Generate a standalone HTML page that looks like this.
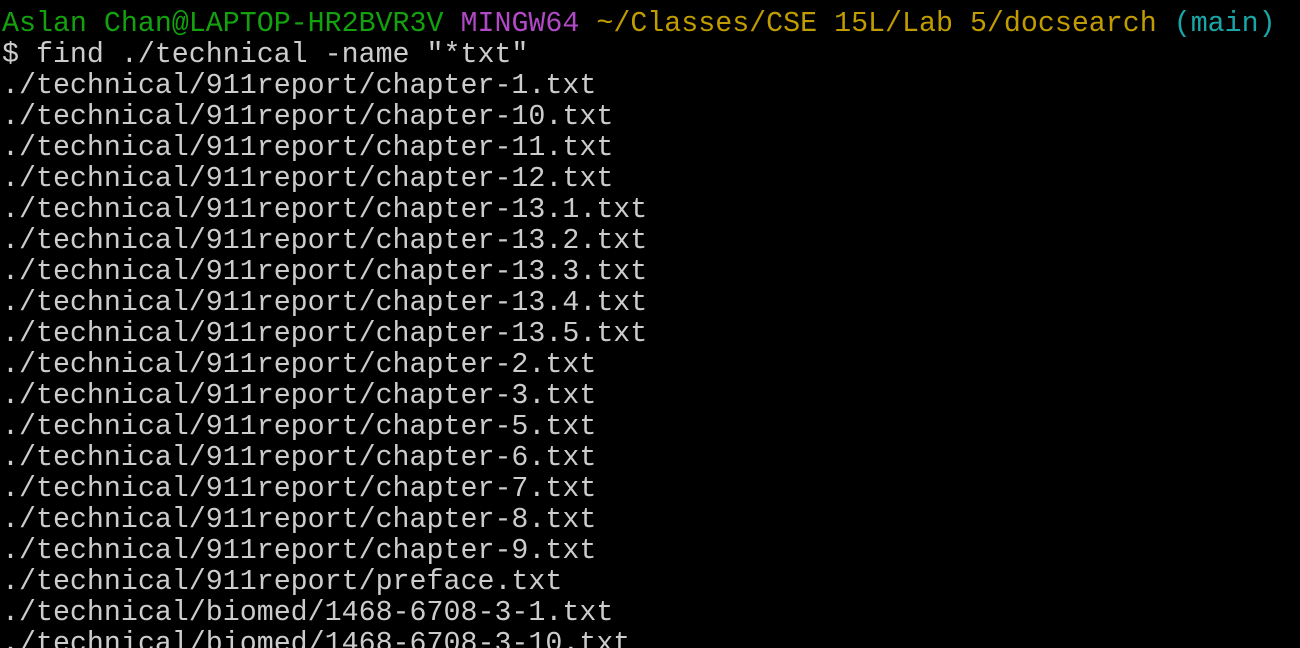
<!DOCTYPE html>
<html><head><meta charset="utf-8"><style>
html,body{margin:0;padding:0;background:#000000;width:1300px;height:648px;overflow:hidden}
pre{margin:0;padding:9px 0 0 2px;font-family:"Liberation Mono",monospace;font-size:28.3px;line-height:31px;color:#cccccc;letter-spacing:0}
.g{color:#13a10e}.m{color:#b148c6}.y{color:#c19c00}.c{color:#1aa6a6}
</style></head><body><pre><span class="g">Aslan Chan@LAPTOP-HR2BVR3V</span> <span class="m">MINGW64</span> <span class="y">~/Classes/CSE 15L/Lab 5/docsearch</span> <span class="c">(main)</span>
$ find ./technical -name "*txt"
./technical/911report/chapter-1.txt
./technical/911report/chapter-10.txt
./technical/911report/chapter-11.txt
./technical/911report/chapter-12.txt
./technical/911report/chapter-13.1.txt
./technical/911report/chapter-13.2.txt
./technical/911report/chapter-13.3.txt
./technical/911report/chapter-13.4.txt
./technical/911report/chapter-13.5.txt
./technical/911report/chapter-2.txt
./technical/911report/chapter-3.txt
./technical/911report/chapter-5.txt
./technical/911report/chapter-6.txt
./technical/911report/chapter-7.txt
./technical/911report/chapter-8.txt
./technical/911report/chapter-9.txt
./technical/911report/preface.txt
./technical/biomed/1468-6708-3-1.txt
./technical/biomed/1468-6708-3-10.txt</pre></body></html>
